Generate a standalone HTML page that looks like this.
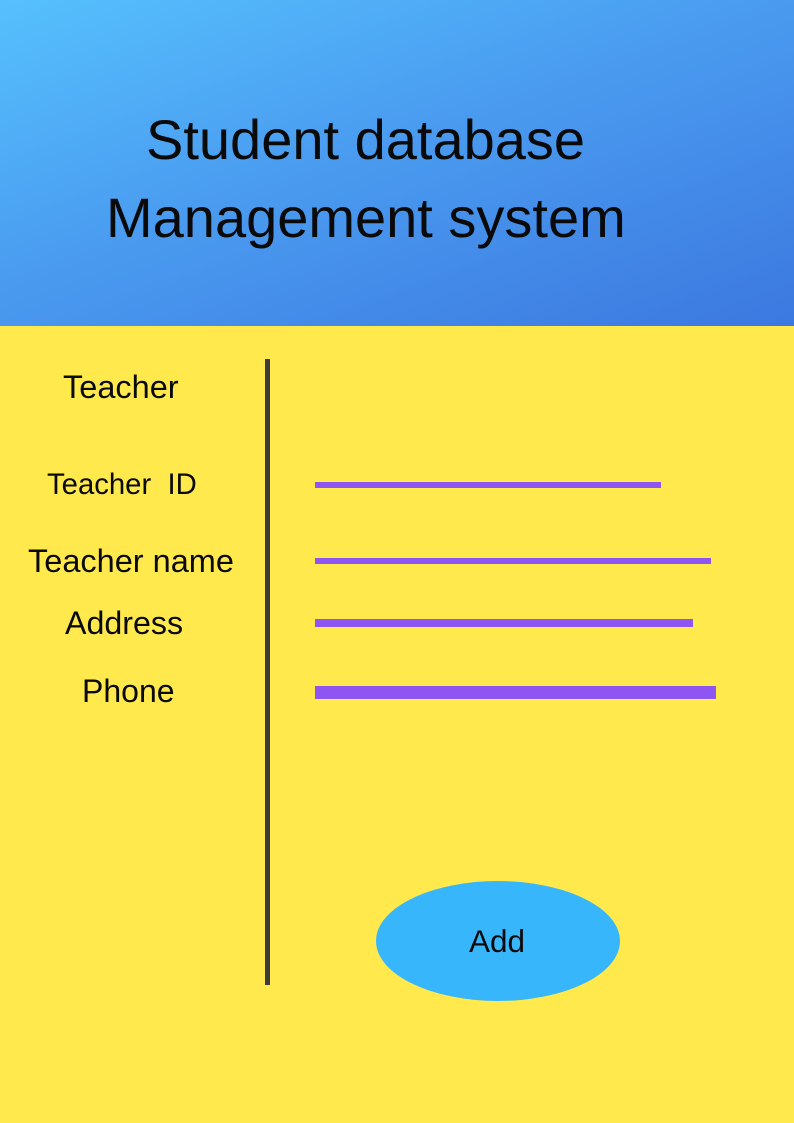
<!DOCTYPE html>
<html><head><meta charset="utf-8"><style>
body{margin:0;width:794px;height:1123px;position:relative;overflow:hidden;background:#ffe94d;font-family:"Liberation Sans",Arial,sans-serif;color:#0a0a0a}
.hdr{position:absolute;left:0;top:0;width:794px;height:326px;background:linear-gradient(160deg,#56c0fd 0%,#4a9cf0 45%,#3c78e0 100%)}
.t{position:absolute;white-space:nowrap;line-height:1}
.bar{position:absolute;background:#8f55f0}
</style></head><body>
<div class="hdr"></div>
<div class="t" style="left:146px;top:112px;font-size:56px">Student database</div>
<div class="t" style="left:106px;top:190px;font-size:56px">Management system</div>
<div style="position:absolute;left:265px;top:359px;width:5px;height:626px;background:#3e3a36"></div>
<div class="t" style="left:63px;top:371px;font-size:32.5px">Teacher</div>
<div class="t" style="left:47px;top:470px;font-size:29.3px">Teacher&nbsp;&nbsp;ID</div>
<div class="t" style="left:28px;top:545px;font-size:32.5px">Teacher name</div>
<div class="t" style="left:65px;top:607px;font-size:32.2px">Address</div>
<div class="t" style="left:82px;top:675px;font-size:32px">Phone</div>
<div class="bar" style="left:315px;top:482px;width:346px;height:6px"></div>
<div class="bar" style="left:315px;top:558px;width:396px;height:6px"></div>
<div class="bar" style="left:315px;top:619px;width:378px;height:8px"></div>
<div class="bar" style="left:315px;top:686px;width:401px;height:13px"></div>
<div style="position:absolute;left:376px;top:881px;width:244px;height:120px;border-radius:50%;background:#38b6fc"></div>
<div class="t" style="left:469px;top:926px;font-size:31.5px">Add</div>
</body></html>
